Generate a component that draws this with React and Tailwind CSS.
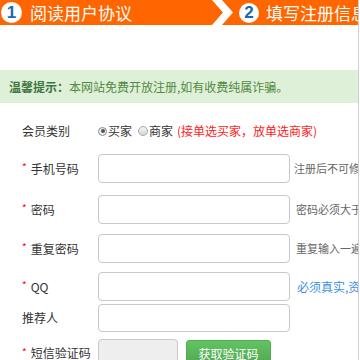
import React from "react";

const font = { fontFamily: '"Noto Sans CJK SC", "Liberation Sans", sans-serif' };

function Star() {
  return <span className="text-[#ff0000] text-[10px] mr-[4px] relative -top-[2px]">*</span>;
}

function Row({ label, star, top, children }) {
  return (
    <div className="flex items-center" style={{ marginTop: top }}>
      <div className="w-[98px] shrink-0 pl-[22px] flex items-center text-[12px] text-[#333] whitespace-nowrap">
        {star && <Star />}
        <span>{label}</span>
      </div>
      {children}
    </div>
  );
}

function Input({ w = 192, h = 29, gray }) {
  return (
    <div
      className={`shrink-0 border border-[#c8c8c8] rounded-[4px] ${gray ? "bg-[#eeeeee]" : "bg-white"}`}
      style={{ width: w, height: h }}
    />
  );
}

export default function App() {
  return (
    <div className="w-[360px] h-[360px] overflow-hidden bg-white flex" style={font}>
      <div className="w-[358px] shrink-0 flex flex-col overflow-hidden">
        {/* header */}
        <div className="h-[25px] bg-[#ff6600] flex items-center shrink-0 overflow-hidden">
          <div className="w-[212px] shrink-0 flex items-center">
            <div className="ml-[1px] w-[21px] h-[21px] rounded-full bg-white flex items-center justify-center text-[#1767b3] text-[17px] font-bold" style={{ fontFamily: '"Liberation Sans", sans-serif' }}>1</div>
            <span className="ml-[8px] text-white text-[17px] leading-none">阅读用户协议</span>
          </div>
          <svg width="24" height="25" viewBox="0 0 24 25" className="shrink-0">
            <polygon points="0,0 10,0 21,12.5 10,25 0,25 11,12.5" fill="#ffffff" />
          </svg>
          <div className="ml-[3px] w-[20px] h-[20px] shrink-0 rounded-full bg-white flex items-center justify-center text-[#1767b3] text-[17px] font-bold" style={{ fontFamily: '"Liberation Sans", sans-serif' }}>2</div>
          <span className="ml-[7px] text-white text-[17px] leading-none whitespace-nowrap">填写注册信息</span>
        </div>

        {/* tip */}
        <div className="mt-[45px] h-[33px] shrink-0 bg-[#dff0d8] text-[#3c763d] text-[12px] pl-[9px] flex items-center whitespace-nowrap">
          <span className="font-bold">温馨提示：</span>
          <span className="text-[#4f8a3f]">本网站免费开放注册,如有收费纯属诈骗。</span>
        </div>

        {/* member type */}
        <div className="flex items-center mt-[18px] h-[19px] shrink-0">
          <div className="w-[98px] shrink-0 pl-[22px] text-[12px] text-[#333]">会员类别</div>
          <div className="flex items-center text-[12px] whitespace-nowrap">
            <span className="w-[9px] h-[9px] rounded-full border border-[#8a8a8a] bg-[#f0f0f0] flex items-center justify-center mt-[1px]">
              <span className="w-[4px] h-[4px] rounded-full bg-[#555]" />
            </span>
            <span className="ml-[1px] text-[#333]">买家</span>
            <span className="ml-[6px] w-[10px] h-[10px] rounded-full border border-[#a8a8a8] bg-gradient-to-b from-[#f4f4f4] to-[#d6d6d6] mt-[1px]" />
            <span className="ml-[1px] text-[#333]">商家</span>
            <span className="ml-[4px] text-[#ff1a1a]">(接单选买家，放单选商家)</span>
          </div>
        </div>

        <Row label="手机号码" star top={14}>
          <Input />
          <span className="ml-[4px] text-[11px] text-[#666] whitespace-nowrap">注册后不可修改</span>
        </Row>
        <Row label="密码" star top={12}>
          <Input />
          <span className="ml-[6px] text-[11px] text-[#666] whitespace-nowrap">密码必须大于6位</span>
        </Row>
        <Row label="重复密码" star top={10}>
          <Input />
          <span className="ml-[6px] text-[11px] text-[#666] whitespace-nowrap">重复输入一遍密码</span>
        </Row>
        <Row label="QQ" star top={9}>
          <Input />
          <span className="ml-[7px] text-[12px] text-[#3a8fe0] whitespace-nowrap">必须真实,资金提现需验证</span>
        </Row>
        <Row label="推荐人" top={3}>
          <Input h={28} />
        </Row>
        <Row label="短信验证码" star top={6}>
          <Input w={80} h={28} gray />
          <button className="ml-[8px] w-[85px] h-[28px] mt-[2px] shrink-0 rounded-[3px] border border-[#4cae4c] bg-gradient-to-b from-[#62c462] to-[#51a351] text-white text-[12px] flex items-center justify-center">
            获取验证码
          </button>
        </Row>
      </div>
      <div className="w-[1px] bg-[#d0d0d0] shrink-0" />
      <div className="w-[1px] bg-white shrink-0" />
    </div>
  );
}
